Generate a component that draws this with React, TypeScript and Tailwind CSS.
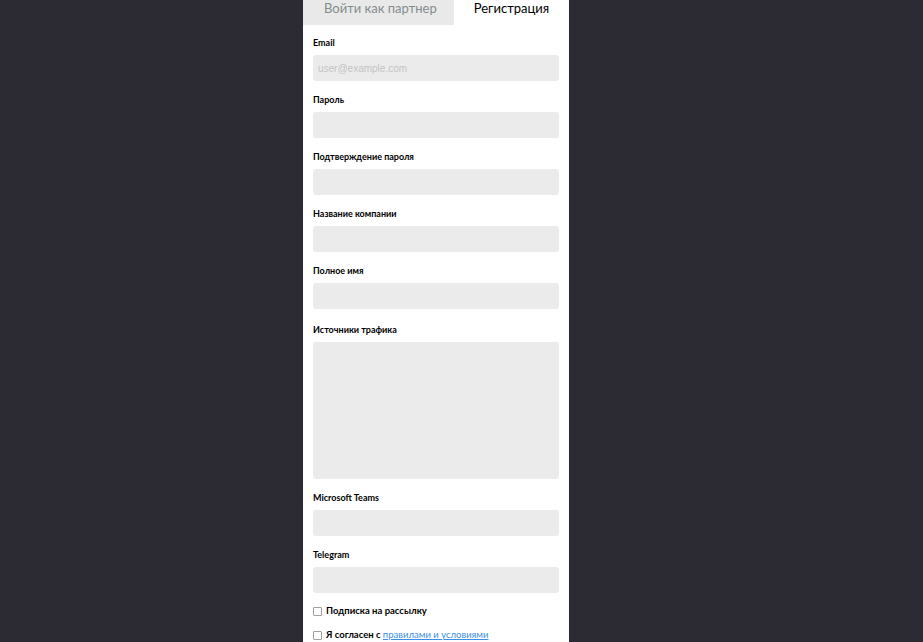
import React from "react";

const Field = ({ label, placeholder, tall }: { label: string; placeholder?: string; tall?: boolean }) => (
  <div className={`flex flex-col mb-[11px] ${tall ? "mt-[2px]" : ""}`}>
    <label className="block text-[9px] leading-[14px] font-bold text-black mt-[1px] mb-[5px]" style={{ fontFamily: "Lato, 'Open Sans', sans-serif" }}>
      {label}
    </label>
    {tall ? (
      <textarea className="block w-full h-[137px] bg-[#ebebeb] rounded-[3px] resize-none outline-none" />
    ) : (
      <input
        className="block w-full h-[26px] bg-[#ebebeb] rounded-[3px] px-[5px] text-[10px] outline-none placeholder:text-[#c4c4c4]"
        style={{ fontFamily: "'Liberation Sans', Arial, sans-serif" }}
        placeholder={placeholder}
      />
    )}
  </div>
);

const Check = ({ children }: { children: React.ReactNode }) => (
  <label className="flex items-center gap-[4px] h-[14px] text-[9.5px] font-bold text-black" style={{ fontFamily: "Lato, 'Open Sans', sans-serif" }}>
    <span className="w-[9px] h-[9px] border border-[#a0a0a0] rounded-[1px] bg-white shrink-0" />
    <span>{children}</span>
  </label>
);

export default function App() {
  return (
    <div className="w-full h-[642px] bg-[#2c2a33] flex pl-[303px] overflow-hidden">
      <div className="w-[266px] bg-white flex flex-col">
        <div className="flex h-[26px]" style={{ fontFamily: "Lato, 'Open Sans', sans-serif" }}>
          <div className="bg-[#e9e9e9] text-[#848c8e] text-[13px] leading-[16px] pl-[21px] w-[151px] whitespace-nowrap">
            Войти как партнер
          </div>
          <div className="flex-1 text-black text-[13px] leading-[16px] text-center whitespace-nowrap">
            Регистрация
          </div>
        </div>
        <div className="px-[10px] pt-[10px] flex flex-col">
          <Field label="Email" placeholder="user@example.com" />
          <Field label="Пароль" />
          <Field label="Подтверждение пароля" />
          <Field label="Название компании" />
          <Field label="Полное имя" />
          <Field label="Источники трафика" tall />
          <Field label="Microsoft Teams" />
          <Field label="Telegram" />
          <div className="flex flex-col gap-[10px]">
            <Check>Подписка на рассылку</Check>
            <Check>
              Я согласен с{" "}
              <a className="text-[#3b8fe6] underline font-normal" href="#">
                правилами и условиями
              </a>
            </Check>
          </div>
        </div>
      </div>
    </div>
  );
}
